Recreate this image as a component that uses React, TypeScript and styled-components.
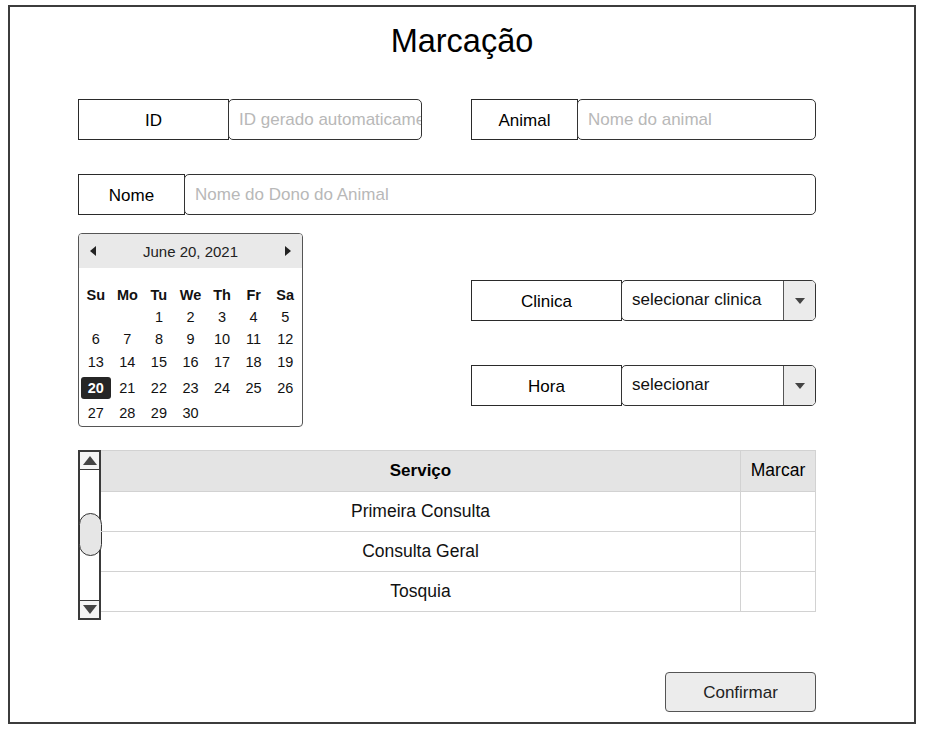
import React from "react";
import styled, { createGlobalStyle } from "styled-components";

const Global = createGlobalStyle`
  html, body { margin: 0; padding: 0; background: #fff; }
  body { font-family: "Liberation Sans", Arial, sans-serif; color: #111; }
  * { box-sizing: border-box; }
`;

const Frame = styled.div`
  margin: 5px 0 0 8px;
  width: 908px;
  height: 719px;
  border: 2px solid #3c3c3c;
  padding: 0 98px 0 68px;
  display: flex;
  flex-direction: column;
`;

const Title = styled.h1`
  margin: 16px 0 0 0;
  font-weight: 400;
  font-size: 32.5px;
  line-height: 37px;
  text-align: center;
  color: #000;
  padding-left: 30px;
`;

const Row = styled.div<{ $mt: number }>`
  margin-top: ${(p) => p.$mt}px;
  display: flex;
  justify-content: space-between;
  align-items: flex-start;
`;

const Group = styled.div<{ $w?: number }>`
  display: flex;
  height: 41px;
  width: ${(p) => (p.$w ? `${p.$w}px` : "100%")};
`;

const Label = styled.div<{ $w: number }>`
  width: ${(p) => p.$w}px;
  flex: none;
  height: 100%;
  border: 1px solid #2a2a2a;
  display: flex;
  align-items: center;
  justify-content: center;
  padding-top: 2px;
  font-size: 17px;
  color: #000;
  background: #fff;
`;

const Input = styled.div`
  flex: 1;
  margin-left: -1px;
  height: 100%;
  border: 1px solid #333;
  border-radius: 5px;
  padding: 1px 10px 0 10px;
  display: flex;
  align-items: center;
  font-size: 17px;
  color: #b8b8b8;
  overflow: hidden;
  white-space: nowrap;
  background: #fff;
`;

const Select = styled.div`
  flex: 1;
  margin-left: -1px;
  height: 100%;
  border: 1px solid #333;
  border-radius: 5px;
  display: flex;
  overflow: hidden;
  background: #fff;
`;

const SelectText = styled.div`
  flex: 1;
  padding: 0 10px 1px 10px;
  display: flex;
  align-items: center;
  font-size: 17px;
  color: #111;
`;

const SelectButton = styled.div`
  width: 32px;
  flex: none;
  border-left: 1px solid #555;
  background: #ebebeb;
  display: flex;
  align-items: center;
  justify-content: center;
`;

const Middle = styled.div`
  margin-top: 18px;
  display: flex;
  justify-content: space-between;
  align-items: flex-start;
`;

const Calendar = styled.div`
  width: 225px;
  height: 194px;
  border: 1px solid #555;
  border-radius: 4px;
  overflow: hidden;
  background: #fff;
`;

const CalHeader = styled.div`
  height: 34px;
  background: #e9e9e9;
  display: flex;
  align-items: center;
  justify-content: space-between;
  padding: 0 10px 0 10px;
  font-size: 15px;
  color: #222;
`;

const CalGrid = styled.div`
  padding: 16px 1px 0 1px;
  display: grid;
  grid-template-columns: repeat(7, 1fr);
  grid-template-rows: 22px 21px 23px 24px 28px 22px;
  font-size: 14.5px;
  color: #111;
`;

const Cell = styled.div<{ $bold?: boolean; $sel?: boolean }>`
  display: flex;
  align-items: center;
  justify-content: center;
  font-weight: ${(p) => (p.$bold || p.$sel ? 700 : 400)};
  & > span {
    display: flex;
    align-items: center;
    justify-content: center;
    width: 30px;
    height: 22px;
    border-radius: 3px;
    background: ${(p) => (p.$sel ? "#262626" : "transparent")};
    color: ${(p) => (p.$sel ? "#fff" : "inherit")};
  }
`;

const RightCol = styled.div`
  width: 345px;
  margin-top: 47px;
  display: flex;
  flex-direction: column;
  gap: 44px;
`;

const TableWrap = styled.div`
  margin-top: 23px;
  display: flex;
  align-items: flex-start;
`;

const Scrollbar = styled.div`
  width: 23px;
  height: 170px;
  border: 2px solid #3a3a3a;
  display: flex;
  flex-direction: column;
  background: #fff;
`;

const ScrollArrow = styled.div<{ $down?: boolean }>`
  height: 18px;
  flex: none;
  display: flex;
  align-items: center;
  justify-content: center;
  background: #f4f4f4;
  border-${(p) => (p.$down ? "top" : "bottom")}: 1px solid #3a3a3a;
`;

const Track = styled.div`
  flex: 1;
  padding-top: 43px;
`;

const Thumb = styled.div`
  margin-left: -1px;
  width: 23px;
  height: 43px;
  border: 1.5px solid #333;
  border-radius: 12px;
  background: #e6e6e6;
`;

const Table = styled.div`
  flex: 1;
  display: grid;
  grid-template-columns: 639px 1fr;
  grid-template-rows: 41px repeat(3, 40px);
  border-right: 1px solid #d2d2d2;
  border-top: 1px solid #d2d2d2;
`;

const Th = styled.div<{ $bold?: boolean; $last?: boolean }>`
  background: #e4e4e4;
  border-bottom: 1px solid #d2d2d2;
  border-left: ${(p) => (p.$last ? "1px solid #d2d2d2" : "none")};
  display: flex;
  align-items: center;
  justify-content: center;
  padding-bottom: 1px;
  font-size: ${(p) => (p.$bold ? "17px" : "17.5px")};
  font-weight: ${(p) => (p.$bold ? 700 : 400)};
  color: #000;
`;

const Td = styled.div<{ $last?: boolean }>`
  border-bottom: 1px solid #d2d2d2;
  border-left: ${(p) => (p.$last ? "1px solid #d2d2d2" : "none")};
  display: flex;
  align-items: center;
  justify-content: center;
  font-size: 17.5px;
  color: #111;
`;

const Footer = styled.div`
  margin-top: 52px;
  display: flex;
  justify-content: flex-end;
`;

const Button = styled.button`
  width: 151px;
  height: 40px;
  border: 1px solid #555;
  border-radius: 4px;
  background: #ececec;
  font-family: "Liberation Sans", Arial, sans-serif;
  font-size: 17px;
  color: #222;
  padding: 1px 0 0 0;
`;

const Caret = () => (
  <svg width="10" height="6" viewBox="0 0 10 6">
    <polygon points="0,0 10,0 5,6" fill="#444" />
  </svg>
);

const Tri = ({ dir }: { dir: "left" | "right" | "up" | "down" }) => {
  const pts: Record<string, string> = {
    left: "7,0 7,10 1,5",
    right: "1,0 1,10 7,5",
    up: "0,10 14,10 7,1",
    down: "0,1 14,1 7,10",
  };
  const vert = dir === "up" || dir === "down";
  return (
    <svg width={vert ? 14 : 8} height={vert ? 11 : 10} viewBox={vert ? "0 0 14 11" : "0 0 8 10"}>
      <polygon points={pts[dir]} fill={vert ? "#444" : "#222"} />
    </svg>
  );
};

const days = ["Su", "Mo", "Tu", "We", "Th", "Fr", "Sa"];

export default function App() {
  const cells: (number | null)[] = [null, null];
  for (let d = 1; d <= 30; d++) cells.push(d);
  while (cells.length < 35) cells.push(null);

  const rows = ["Primeira Consulta", "Consulta Geral", "Tosquia"];

  return (
    <>
      <Global />
      <Frame>
        <Title>Marcação</Title>
        <Row $mt={39}>
          <Group $w={344}>
            <Label $w={151}>ID</Label>
            <Input>ID gerado automaticamente</Input>
          </Group>
          <Group $w={345}>
            <Label $w={107}>Animal</Label>
            <Input>Nome do animal</Input>
          </Group>
        </Row>
        <Row $mt={34}>
          <Group>
            <Label $w={107}>Nome</Label>
            <Input>Nome do Dono do Animal</Input>
          </Group>
        </Row>
        <Middle>
          <Calendar>
            <CalHeader>
              <Tri dir="left" />
              <span>June 20, 2021</span>
              <Tri dir="right" />
            </CalHeader>
            <CalGrid>
              {days.map((d) => (
                <Cell key={d} $bold>
                  {d}
                </Cell>
              ))}
              {cells.map((d, i) => (
                <Cell key={i} $sel={d === 20}>
                  {d ? <span>{d}</span> : null}
                </Cell>
              ))}
            </CalGrid>
          </Calendar>
          <RightCol>
            <Group>
              <Label $w={151}>Clinica</Label>
              <Select>
                <SelectText>selecionar clinica</SelectText>
                <SelectButton>
                  <Caret />
                </SelectButton>
              </Select>
            </Group>
            <Group>
              <Label $w={151}>Hora</Label>
              <Select>
                <SelectText>selecionar</SelectText>
                <SelectButton>
                  <Caret />
                </SelectButton>
              </Select>
            </Group>
          </RightCol>
        </Middle>
        <TableWrap>
          <Scrollbar>
            <ScrollArrow>
              <Tri dir="up" />
            </ScrollArrow>
            <Track>
              <Thumb />
            </Track>
            <ScrollArrow $down>
              <Tri dir="down" />
            </ScrollArrow>
          </Scrollbar>
          <Table>
            <Th $bold>Serviço</Th>
            <Th $last>Marcar</Th>
            {rows.map((r) => (
              <React.Fragment key={r}>
                <Td>{r}</Td>
                <Td $last />
              </React.Fragment>
            ))}
          </Table>
        </TableWrap>
        <Footer>
          <Button>Confirmar</Button>
        </Footer>
      </Frame>
    </>
  );
}
